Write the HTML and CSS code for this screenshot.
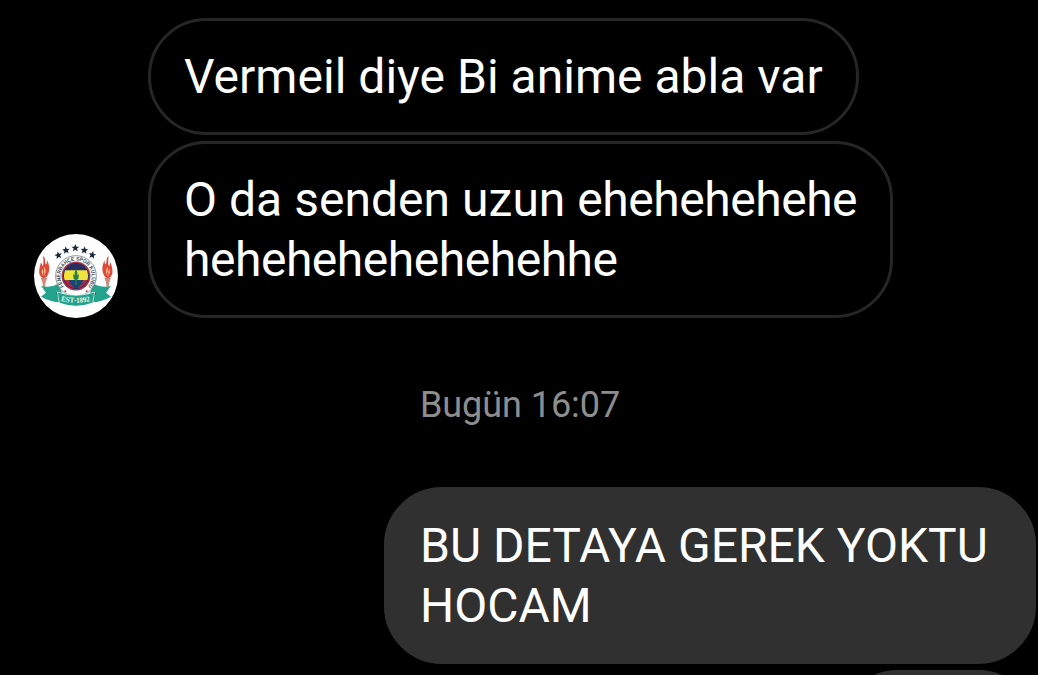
FILE: index.html
```html
<!DOCTYPE html>
<html lang="tr">
<head>
  <meta charset="UTF-8">
  <title>Mesajlar</title>
  <link rel="stylesheet" href="styles.css">
</head>
<body>

<main class="chat">
  <div class="group received">
    <svg class="avatar" viewBox="12 12 252 252">
      <defs>
        <path id="ring" d="M 102 169 A 47 47 0 1 1 174 169"/>
        <path id="ribbonText" d="M 93 213 Q 138 223 183 213"/>
        <clipPath id="shield"><circle cx="138" cy="138" r="38"/></clipPath>
        <path id="star" d="M0 -12 L3.2 -4 L11.5 -3.6 L5 1.6 L7.2 9.8 L0 5.4 L-7.2 9.8 L-5 1.6 L-11.5 -3.6 L-3.2 -4 Z"/>
        <g id="torch">
          <path d="M32 143 L52 143 L47 157 L45 174 L40 174 L37 157 Z" fill="#d08a7c"/>
          <path d="M40 77 C49 89 43 96 48 103 C52 100 51 95 51 90 C58 104 60 118 56 128 C53 138 48 144 41 145 C31 142 26 132 28 120 C28 112 31 107 33 97 C36 102 36 106 37 109 C43 100 39 91 40 77 Z" fill="#df4a3a"/>
          <path d="M42 110 C50 119 47 131 41 139 C34 131 34 122 38 117 C40 121 39 125 41 127 C44 120 41 115 42 110 Z" fill="#f6c08b"/>
          <path d="M42 124 Q46 132 41 139 Q36 133 42 124" fill="#e5503d"/>
        </g>
      </defs>
      <circle cx="138" cy="138" r="126" fill="#fdfdfd"/>

      <!-- stars -->
      <g fill="#17283a">
        <use href="#star" transform="translate(85 76) rotate(-12)"/>
        <use href="#star" transform="translate(108 61) rotate(-6)"/>
        <use href="#star" transform="translate(136 54)"/>
        <use href="#star" transform="translate(163 61) rotate(6)"/>
        <use href="#star" transform="translate(187 75) rotate(12)"/>
      </g>

      <!-- torches -->
      <use href="#torch"/>
      <use href="#torch" transform="translate(275 0) scale(-1 1)"/>

      <!-- ribbon ends -->
      <path d="M33 167 Q58 176 84 162 L98 192 L90 217 Q62 216 33 200 L48 188 Z" fill="#24a28b"/>
      <path d="M243 167 Q218 176 192 162 L178 192 L186 217 Q214 216 243 200 L228 188 Z" fill="#24a28b"/>
      <path d="M77 188 L96 192 L90 213 Z M199 188 L180 192 L186 213 Z" fill="#11705f"/>

      <!-- badge -->
      <circle cx="138" cy="138" r="61" fill="#fff" stroke="#53656b" stroke-width="2"/>
      <text class="badge-text"><textPath href="#ring" textLength="214" lengthAdjust="spacingAndGlyphs">FENERBAHÇE SPOR KULÜBÜ</textPath></text>
      <circle cx="138" cy="138" r="43" fill="#c62b40" stroke="#5e5264" stroke-width="1"/>
      <g clip-path="url(#shield)">
        <path d="M98 96 H178 V182 H98 Z" fill="#252f62"/>
        <path d="M98 121 H178 V151 H98 Z" fill="#f1e43a"/>
        <path d="M98 151 H178 L138 188 Z" fill="#bd2442"/>
        <path d="M118 150 H158 V160 L138 178 L118 160 Z" fill="#164675"/>
        <path d="M138 116 L142 127 L142 135 L147 133 L145 147 L140 150 V164 H136 V150 L131 147 L129 133 L134 135 L134 127 Z" fill="#2d7f4a"/>
      </g>
      <circle cx="138" cy="138" r="38" fill="none" stroke="#283260" stroke-width="3"/>
      <circle cx="106" cy="184" r="3" fill="#bf3040"/>
      <circle cx="170" cy="184" r="3" fill="#bf3040"/>

      <!-- front ribbon -->
      <path d="M82 186 Q138 206 194 186 L188 219 Q138 238 88 219 Z" fill="#24a28b" stroke="#fff" stroke-width="2"/>
      <text class="ribbon-text"><textPath href="#ribbonText" textLength="88" lengthAdjust="spacingAndGlyphs">EST·1892</textPath></text>
    </svg>
    <div class="messages">
      <div class="bubble">Vermeil diye Bi anime abla var</div>
      <div class="bubble">O da senden uzun <span class="laugh">ehehehehehe<br>hehehehehehehehhe</span></div>
    </div>
  </div>

  <div class="date">Bugün 16:07</div>

  <div class="group sent">
    <div class="bubble wide">BU DETAYA GEREK YOKTU<br>HOCAM</div>
    <div class="bubble next"></div>
  </div>
</main>

</body>
</html>
```

FILE: styles.css
```css
* {
  box-sizing: border-box;
}

body {
  margin: 0;
  background: #000;
  font-family: Roboto, "Liberation Sans", sans-serif;
}

.chat {
  height: 675px;
  padding: 18px 2px 0 34px;
  overflow: hidden;
}

.group {
  display: flex;
}

.received {
  align-items: flex-end;
  gap: 30px;
}

.messages {
  display: flex;
  flex-direction: column;
  align-items: flex-start;
  gap: 6px;
}

.avatar {
  width: 84px;
  height: 84px;
  flex-shrink: 0;
}

.badge-text {
  font-family: "Liberation Sans", sans-serif;
  font-size: 16px;
  font-weight: bold;
  fill: #3c474e;
}

.ribbon-text {
  font-family: "Liberation Serif", serif;
  font-size: 22px;
  font-weight: bold;
  fill: #e6fff8;
}

.bubble {
  padding: 25.5px 33px;
  border: 3px solid #262626;
  border-radius: 58px;
  color: #fff;
  font-size: 48px;
  line-height: 60px;
  letter-spacing: 0.03px;
  white-space: nowrap;
}

.laugh {
  letter-spacing: -0.47px;
}

.date {
  margin-top: 63px;
  padding-right: 30px;
  color: #8e8e8e;
  font-size: 36px;
  line-height: 48px;
  letter-spacing: -0.05px;
  text-align: center;
}

.sent {
  flex-direction: column;
  align-items: flex-end;
  gap: 6px;
  margin-top: 58px;
}

.sent .bubble {
  background: #303030;
  border-color: #303030;
  letter-spacing: 0;
}

.wide {
  width: 652px;
}

.next {
  width: 196px;
  height: 117px;
}
```
